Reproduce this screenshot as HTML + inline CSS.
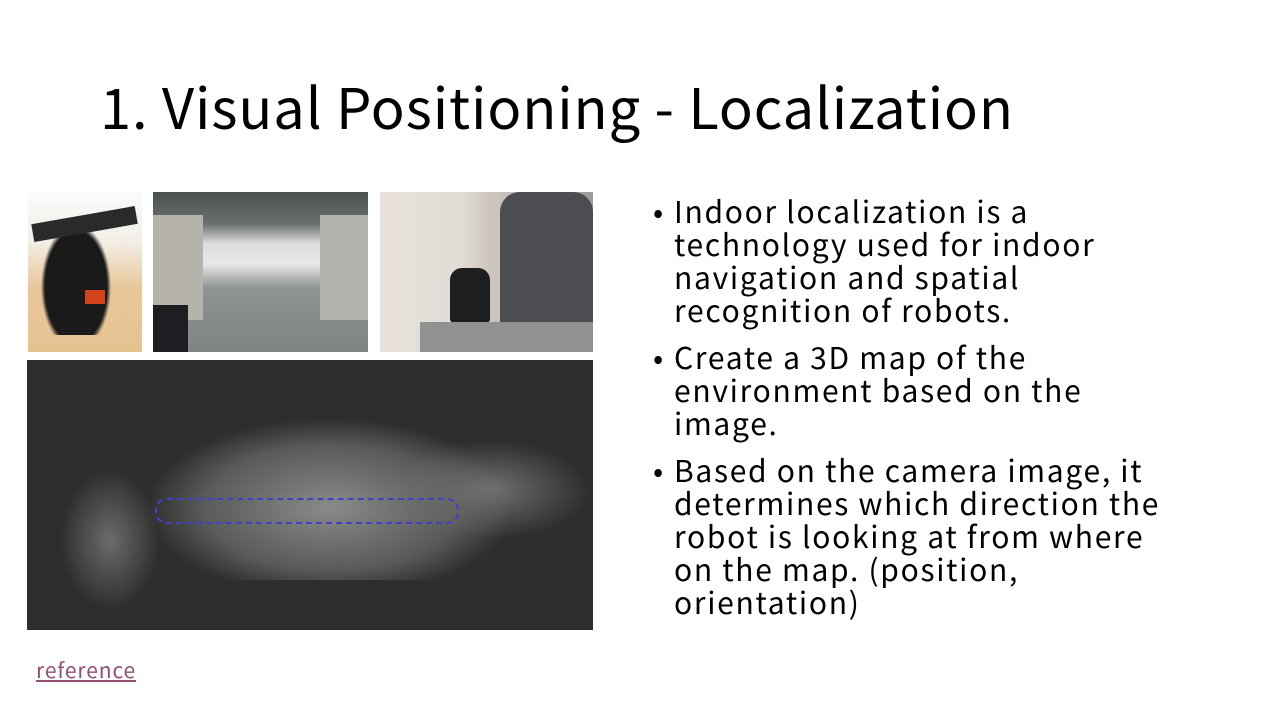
<!DOCTYPE html>
<html><head><meta charset="utf-8"><style>
body{margin:0;width:1280px;height:720px;background:#fff;position:relative;overflow:hidden;font-family:"Noto Sans CJK KR","Liberation Sans",sans-serif;}
.t{position:absolute;left:100px;top:66px;font-size:56px;color:#000;white-space:nowrap;letter-spacing:0.9px}
.b{position:absolute;left:674px;width:560px;font-size:30px;line-height:33px;color:#000;letter-spacing:1.7px;white-space:nowrap}
.b:before{content:"•";position:absolute;left:-21px;}
.a{position:absolute;}
</style></head><body>
<div class="t" style="line-height:80px">1. Visual Positioning - Localization</div>

<div class="a" style="left:28px;top:192px;width:114px;height:160px;background:linear-gradient(180deg,#fafafa 0%,#f3efe8 30%,#e9c79a 60%,#e5c290 100%)"></div>
<div class="a" style="left:36px;top:215px;width:80px;height:120px;background:radial-gradient(ellipse at 50% 60%,#1a1a1a 55%,transparent 62%)"></div>
<div class="a" style="left:32px;top:215px;width:105px;height:18px;background:#2a2a2a;transform:rotate(-10deg)"></div>
<div class="a" style="left:85px;top:290px;width:20px;height:14px;background:#d4441c"></div>

<div class="a" style="left:153px;top:192px;width:215px;height:160px;background:linear-gradient(180deg,#4a4f4f 0%,#6a7070 20%,#dcdcdc 32%,#e8e8e8 45%,#8e9292 60%,#7f8484 100%)"></div>
<div class="a" style="left:153px;top:215px;width:50px;height:105px;background:#b6b3ad"></div>
<div class="a" style="left:320px;top:215px;width:48px;height:105px;background:#b4b2ad"></div>
<div class="a" style="left:153px;top:305px;width:35px;height:47px;background:#1e1e22"></div>

<div class="a" style="left:380px;top:192px;width:213px;height:160px;background:linear-gradient(90deg,#e8e2da 0%,#e0dcd6 38%,#cfc8bf 50%,#9a9a98 100%)"></div>
<div class="a" style="left:500px;top:192px;width:93px;height:135px;background:#4b4d50;border-radius:20px 20px 0 0"></div>
<div class="a" style="left:450px;top:268px;width:40px;height:55px;background:#1d1e20;border-radius:12px 12px 4px 4px"></div>
<div class="a" style="left:420px;top:322px;width:173px;height:30px;background:#8f9290"></div>

<div class="a" style="left:27px;top:360px;width:566px;height:270px;background:#2e2e2e"></div>
<div class="a" style="left:150px;top:420px;width:360px;height:160px;background:radial-gradient(ellipse at 50% 55%,#8a8a88 0%,#5a5a58 50%,transparent 72%)"></div>
<div class="a" style="left:60px;top:470px;width:100px;height:140px;background:radial-gradient(ellipse,#6b6d6a 0%,transparent 70%)"></div>
<div class="a" style="left:390px;top:440px;width:200px;height:100px;background:radial-gradient(ellipse,#707070 0%,transparent 70%)"></div>
<div class="a" style="left:155px;top:498px;width:300px;height:22px;border:2px dashed #4040d0;border-radius:12px;"></div>

<div class="b" style="top:194px">Indoor localization is a<br>technology used for indoor<br>navigation and spatial<br>recognition of robots.</div>
<div class="b" style="top:340px">Create a 3D map of the<br>environment based on the<br>image.</div>
<div class="b" style="top:453px">Based on the camera image, it<br>determines which direction the<br>robot is looking at from where<br>on the map. (position,<br>orientation)</div>

<a class="a" style="left:36px;top:655px;font-size:21px;color:#954f72;text-decoration:underline;letter-spacing:0.9px">reference</a>
</body></html>
